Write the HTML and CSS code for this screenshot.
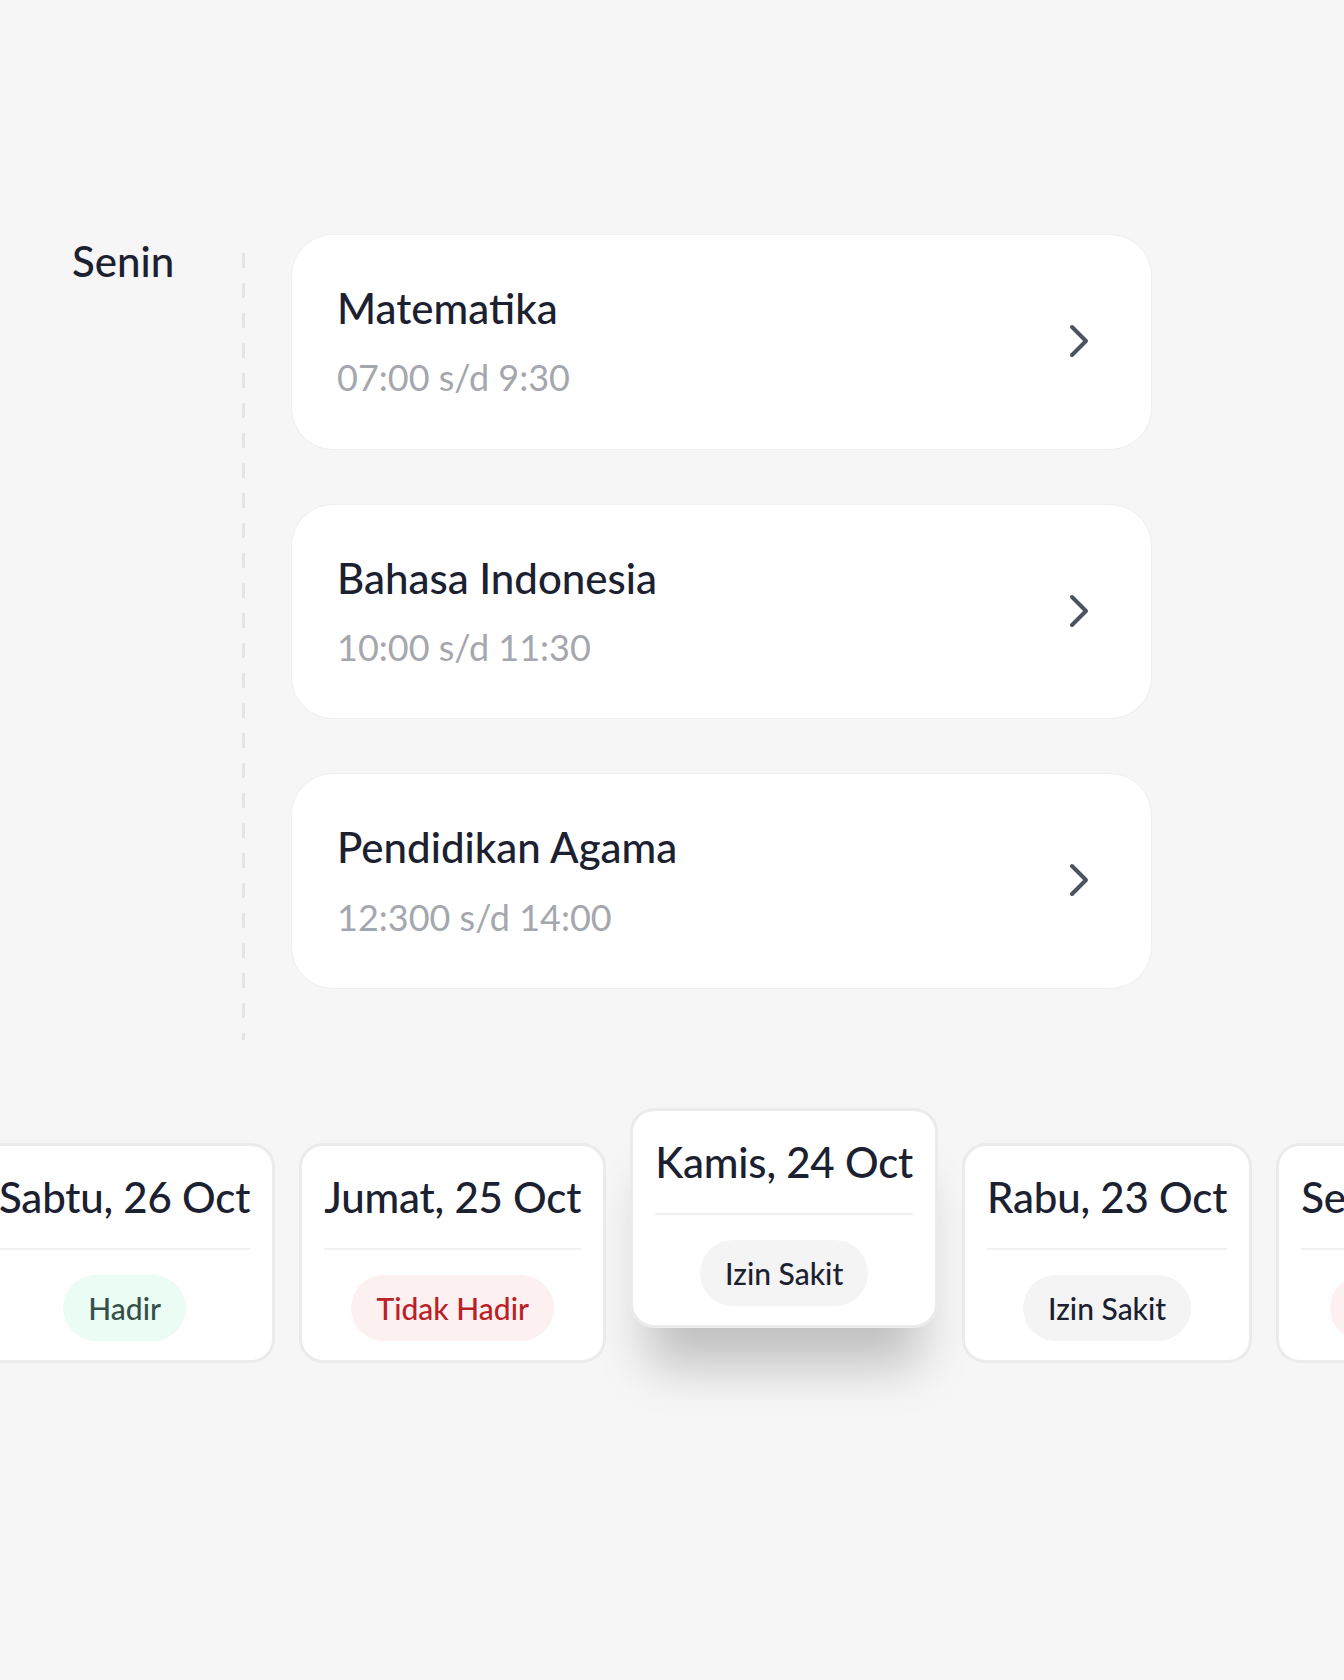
FILE: index.html
```html
<!DOCTYPE html>
<html lang="id">
<head>
<meta charset="utf-8">
<title>Jadwal</title>
<link rel="stylesheet" href="styles.css">
</head>
<body>
<main class="page">
  <section class="day-schedule">
    <h2 class="day-label">Senin</h2>
    <div class="timeline"></div>
    <div class="lesson-list">
      <a class="lesson-card" href="#">
        <div class="lesson-info">
          <div class="lesson-title">Matematika</div>
          <div class="lesson-time">07:00 s/d 9:30</div>
        </div>
        <svg class="chevron" width="24" height="36" viewBox="0 0 24 36"><path d="M5 4 L19 18 L5 32" fill="none" stroke="#4b5260" stroke-width="4" stroke-linecap="round" stroke-linejoin="round"/></svg>
      </a>
      <a class="lesson-card" href="#">
        <div class="lesson-info">
          <div class="lesson-title">Bahasa Indonesia</div>
          <div class="lesson-time">10:00 s/d 11:30</div>
        </div>
        <svg class="chevron" width="24" height="36" viewBox="0 0 24 36"><path d="M5 4 L19 18 L5 32" fill="none" stroke="#4b5260" stroke-width="4" stroke-linecap="round" stroke-linejoin="round"/></svg>
      </a>
      <a class="lesson-card" href="#">
        <div class="lesson-info">
          <div class="lesson-title">Pendidikan Agama</div>
          <div class="lesson-time">12:300 s/d 14:00</div>
        </div>
        <svg class="chevron" width="24" height="36" viewBox="0 0 24 36"><path d="M5 4 L19 18 L5 32" fill="none" stroke="#4b5260" stroke-width="4" stroke-linecap="round" stroke-linejoin="round"/></svg>
      </a>
    </div>
  </section>

  <section class="date-strip">
    <div class="day-card">
      <div class="day-date">Sabtu, 26 Oct</div>
      <div class="day-divider"></div>
      <span class="status status-hadir">Hadir</span>
    </div>
    <div class="day-card">
      <div class="day-date">Jumat, 25 Oct</div>
      <div class="day-divider"></div>
      <span class="status status-absent">Tidak Hadir</span>
    </div>
    <div class="day-card active">
      <div class="day-date">Kamis, 24 Oct</div>
      <div class="day-divider"></div>
      <span class="status status-sick">Izin Sakit</span>
    </div>
    <div class="day-card">
      <div class="day-date">Rabu, 23 Oct</div>
      <div class="day-divider"></div>
      <span class="status status-sick">Izin Sakit</span>
    </div>
    <div class="day-card">
      <div class="day-date">Selasa, 22 Oct</div>
      <div class="day-divider"></div>
      <span class="status status-absent">Tidak Hadir</span>
    </div>
  </section>
</main>
</body>
</html>
```

FILE: styles.css
```css
* {
  box-sizing: border-box;
}

html, body {
  margin: 0;
  padding: 0;
}

body {
  background: #f6f6f6;
  font-family: Lato, "Noto Sans", sans-serif;
  color: #1b2130;
  width: 1344px;
  height: 1680px;
  overflow: hidden;
}

.page {
  padding-top: 234px;
}

/* ---------- Schedule ---------- */
.day-schedule {
  display: flex;
  align-items: stretch;
  padding-left: 72px;
}

.day-label {
  width: 170px;
  flex: none;
  margin: 2px 0 0 0;
  font-size: 42px;
  line-height: 1.2;
  font-weight: 500;
  color: #1b2130;
}

.timeline {
  width: 3px;
  flex: none;
  margin-top: 19px;
  background: repeating-linear-gradient(to bottom, #e4e4e4 0, #e4e4e4 15px, transparent 15px, transparent 30px);
}

.lesson-list {
  margin-left: 46px;
  margin-bottom: 51px;
  width: 861px;
  display: flex;
  flex-direction: column;
  gap: 54px;
}

.lesson-card {
  display: flex;
  align-items: center;
  justify-content: space-between;
  background: #ffffff;
  border: 1px solid #efefef;
  border-radius: 42px;
  padding: 48px 60px 49px 45px;
  text-decoration: none;
  color: inherit;
}

.lesson-info {
  display: flex;
  flex-direction: column;
  gap: 23px;
}

.lesson-title {
  font-size: 42px;
  line-height: 1.2;
  font-weight: 500;
  color: #1b2130;
}

.lesson-time {
  font-size: 36px;
  line-height: 1.2;
  color: #a4a7ae;
}

.chevron {
  flex: none;
  display: block;
}

/* ---------- Date strip ---------- */
.date-strip {
  display: flex;
  align-items: flex-start;
  gap: 24px;
  margin-top: 68px;
  margin-left: -26px;
  width: max-content;
}

.day-card {
  flex: none;
  margin-top: 35px;
  display: flex;
  flex-direction: column;
  align-items: center;
  background: #ffffff;
  border: 3px solid #ebebeb;
  border-radius: 24px;
  padding: 26px 22px 19px;
}

.day-card.active {
  margin-top: 0;
  box-shadow: 0 56px 50px -18px rgba(0, 0, 0, 0.22);
}

.day-date {
  font-size: 42px;
  line-height: 1.2;
  font-weight: 500;
  letter-spacing: -0.2px;
  color: #1b2130;
  white-space: nowrap;
}

.day-divider {
  align-self: stretch;
  height: 2px;
  background: #f1f1f1;
  margin: 26px 0 25px;
}

.status {
  display: inline-block;
  font-size: 30px;
  line-height: 36px;
  padding: 15px 25px;
  border-radius: 999px;
  white-space: nowrap;
  font-weight: 500;
}

.status-hadir {
  background: #ebfcf4;
  color: #35504b;
}

.status-absent {
  background: #fdf0f0;
  color: #bb2026;
}

.status-sick {
  background: #f4f4f4;
  color: #1b2130;
}
```
